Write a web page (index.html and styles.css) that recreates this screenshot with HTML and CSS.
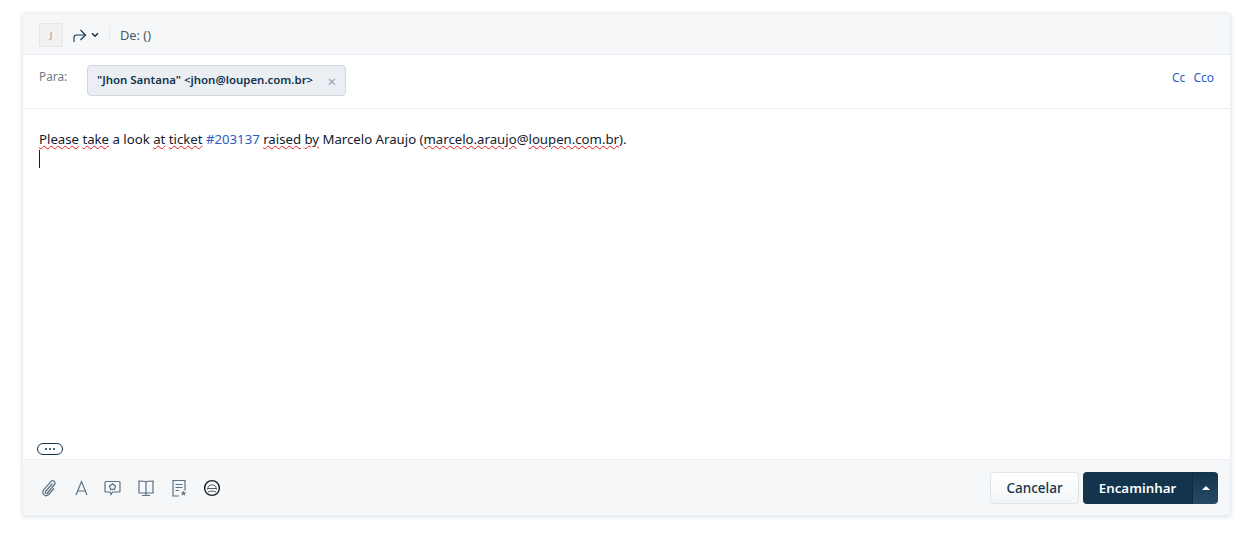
FILE: index.html
```html
<!DOCTYPE html>
<html lang="pt">
<head>
<meta charset="utf-8">
<title>Encaminhar</title>
<link rel="stylesheet" href="styles.css">
</head>
<body>
<div class="composer">
  <header class="top">
    <span class="avatar">J</span>
    <svg class="reply" width="14" height="14" viewBox="0 0 14 14" fill="none" stroke="#12344d" stroke-width="1.1"><path d="M1 13V8.500C1 6.800 2.200 6 4 6H12.500"/><path d="M7.500 1L12.500 6L7.500 11"/></svg>
    <svg class="caret" width="8" height="6" viewBox="0 0 8 6" fill="none" stroke="#12344d" stroke-width="1.5"><path d="M1 1.200L4 4.200L7 1.200"/></svg>
    <span class="sep"></span>
    <span class="from">De: ()</span>
  </header>
  <section class="to">
    <span class="to-label">Para:</span>
    <span class="chip"><span class="chip-text">"Jhon Santana" &lt;jhon@loupen.com.br&gt;</span><span class="chip-x">×</span></span>
    <span class="cc"><a>Cc</a><a>Cco</a></span>
  </section>
  <main class="body">
    <div class="text"><span class="sp">Please</span> <span class="sp">take</span> a look <span class="sp">at</span> <span class="sp">ticket</span> <a class="link">#203137</a> <span class="sp">raised</span> <span class="sp">by</span> Marcelo Araujo (<span class="sp">marcelo.araujo</span>@<span class="sp">loupen.com.br</span>).</div>
    <div class="cursor"></div>
    <div class="spacer"></div>
    <span class="more"><i></i><i></i><i></i></span>
  </main>
  <footer class="bottom">
    <div class="tools">
      <svg viewBox="0 0 20 20" fill="none" stroke="#5c7183" stroke-width="1.2"><path d="M13.500 5.500L6.500 13.500C5.500 14.800 7.300 16.200 8.400 15L15.200 7C17.500 4.300 14.200 1 11.800 3.600L4.800 11.600C2 15.200 6 19.800 9.600 16.500L15 10.500"/></svg>
      <svg viewBox="0.500 0 20 20" fill="none" stroke="#5c7183" stroke-width="1.2"><path d="M4.500 17L10 3.500L15.500 17M6 13H14"/></svg>
      <svg viewBox="1.500 0 20 20" fill="none" stroke="#5c7183" stroke-width="1.2"><path d="M3.500 3.500H16.500C17.100 3.500 17.500 3.900 17.500 4.500V13C17.500 13.600 17.100 14 16.500 14H10L8.500 16.500L7.500 14H3.500C2.900 14 2.500 13.600 2.500 13V4.500C2.500 3.900 2.900 3.500 3.500 3.500Z"/><path d="M10 5.800L13 8L11.900 11.300H8.100L7 8Z"/></svg>
      <svg viewBox="1 0 20 20" fill="none" stroke="#5c7183" stroke-width="1.2"><path d="M10 4C8.800 3.200 6 3 3 3V15H8C9 15 9.600 15.300 10 16C10.400 15.300 11 15 12 15H17V3C14 3 11.200 3.200 10 4ZM10 4V16M6 17.500H14"/></svg>
      <svg viewBox="0 0 20 20" fill="none" stroke="#5c7183" stroke-width="1.2"><path d="M10 18H4V2.500H16V12.500M6.500 6.500H13.500M6.500 9.500H13.500M6.500 12.500H10"/><path d="M14.500 12.800L15.300 14.500H17.200L15.800 15.700L16.300 17.700L14.500 16.600L12.700 17.700L13.200 15.700L11.800 14.500H13.700Z" fill="#5c7183" stroke="none"/></svg>
      <svg viewBox="0 0 20 20" fill="none"><circle cx="10" cy="10" r="7.400" stroke="#12202c" stroke-width="1.400"/><path d="M5.500 11.500C5.800 8.300 7.400 6.800 10 6.800C12.600 6.800 14.200 8.300 14.500 11.500M5.500 10.500H14.500M6 14C7.500 12.800 12.500 12.800 14 14" stroke="#3d4a55" stroke-width="0.900"/></svg>
    </div>
    <div class="actions">
      <button class="cancel">Cancelar</button>
      <div class="split">
        <button class="send">Encaminhar</button>
        <button class="send-more"><span class="tri"></span></button>
      </div>
    </div>
  </footer>
</div>
</body>
</html>
```
FILE: styles.css
```css
* { box-sizing: border-box; }
html, body { margin: 0; height: 100%; background: #fff; }
body { padding: 13px 17px 0 22px; font-family: "Noto Sans", "Open Sans", sans-serif; color: #12344d; }
.composer {
  width: 1209px; height: 503px; display: flex; flex-direction: column;
  background: #fff; border: 1px solid #ebeff3; border-radius: 4px;
  box-shadow: 0 1px 4px rgba(18, 52, 77, .16);
  overflow: hidden;
}
.top {
  height: 41px; flex: none; display: flex; align-items: center;
  padding: 2px 0 0 16px; background: #f5f7f9; border-bottom: 1px solid #ebeff3;
}
.avatar {
  width: 24px; height: 24px; display: flex; align-items: center; justify-content: center;
  background: #f3f1f0; border: 1px solid #e6e6e6; border-radius: 2px;
  font-size: 9px; color: #8a8a8a;
}
.reply { margin: 2px 0 0 10px; }
.caret { margin-left: 4px; }
.sep { width: 1px; height: 16px; background: #e6eaee; margin: 0 10px; }
.from { font-size: 12.800px; color: #475867; }
.to {
  height: 54px; flex: none; display: flex; align-items: flex-start;
  padding: 10px 16px 0 16px; border-bottom: 1px solid #ebeff3;
}
.to-label { font-size: 11.800px; color: #6f7c87; width: 48px; padding-top: 3px; }
.chip {
  width: 259px; height: 31px; display: flex; align-items: center; justify-content: space-between;
  padding: 0 8px 2px 9px; background: #ebeff3; border: 1px solid #cfd7df; border-radius: 4px;
}
.chip-text { font-size: 11.450px; font-weight: 600; color: #12344d; white-space: nowrap; }
.chip-x { font-size: 15px; line-height: 1; color: #92a2b1; margin: 3px 1px 0 0; }
.cc { margin-left: auto; display: flex; gap: 8px; padding-top: 4px; font-size: 12px; color: #2c5cc5; }
.body { flex: 1; display: flex; flex-direction: column; padding: 20px 16px 4px 16px; min-height: 0; }
.text { font-size: 13.200px; line-height: 20px; color: #12202c; white-space: nowrap; }
.sp { text-decoration: underline wavy #e3141c 1px; text-underline-offset: 1px; }
.link { color: #2c5cc5; }
.cursor { width: 1px; height: 18px; background: #12202c; margin-top: 1px; }
.spacer { flex: 1; }
.more {
  width: 26px; height: 12px; margin-left: -2px; display: flex; align-items: center; justify-content: center; gap: 2px;
  border: 1px solid #12344d; border-radius: 6px;
}
.more i { width: 2px; height: 2px; background: #12344d; border-radius: 50%; }
.bottom {
  height: 56px; flex: none; display: flex; align-items: center; justify-content: space-between;
  padding: 0 12px 0 16px; background: #f5f7f9; border-top: 1px solid #ebeff3;
}
.tools { display: flex; align-items: center; gap: 12.600px; }
.tools svg { width: 20px; height: 20px; flex: none; }
.actions { display: flex; gap: 4px; }
button { font-family: inherit; cursor: pointer; }
.cancel {
  width: 89px; height: 32px; font-size: 13.500px; font-weight: 500; color: #12344d;
  background: linear-gradient(#fff, #f3f5f7); border: 1px solid #dfe4e9; border-radius: 4px;
}
.split { display: flex; height: 32px; }
.send {
  width: 109px; font-size: 13.300px; font-weight: 600; color: #fff; background: #12344d;
  border: 0; border-radius: 4px 0 0 4px;
}
.send-more {
  width: 26px; display: flex; align-items: center; justify-content: center;
  background: linear-gradient(#12344d, #264966); border: 0; border-left: 1px solid #0d2a40; border-radius: 0 4px 4px 0;
}
.tri { width: 0; height: 0; border: 4px solid transparent; border-top: 0; border-bottom-color: #fff; }
```
